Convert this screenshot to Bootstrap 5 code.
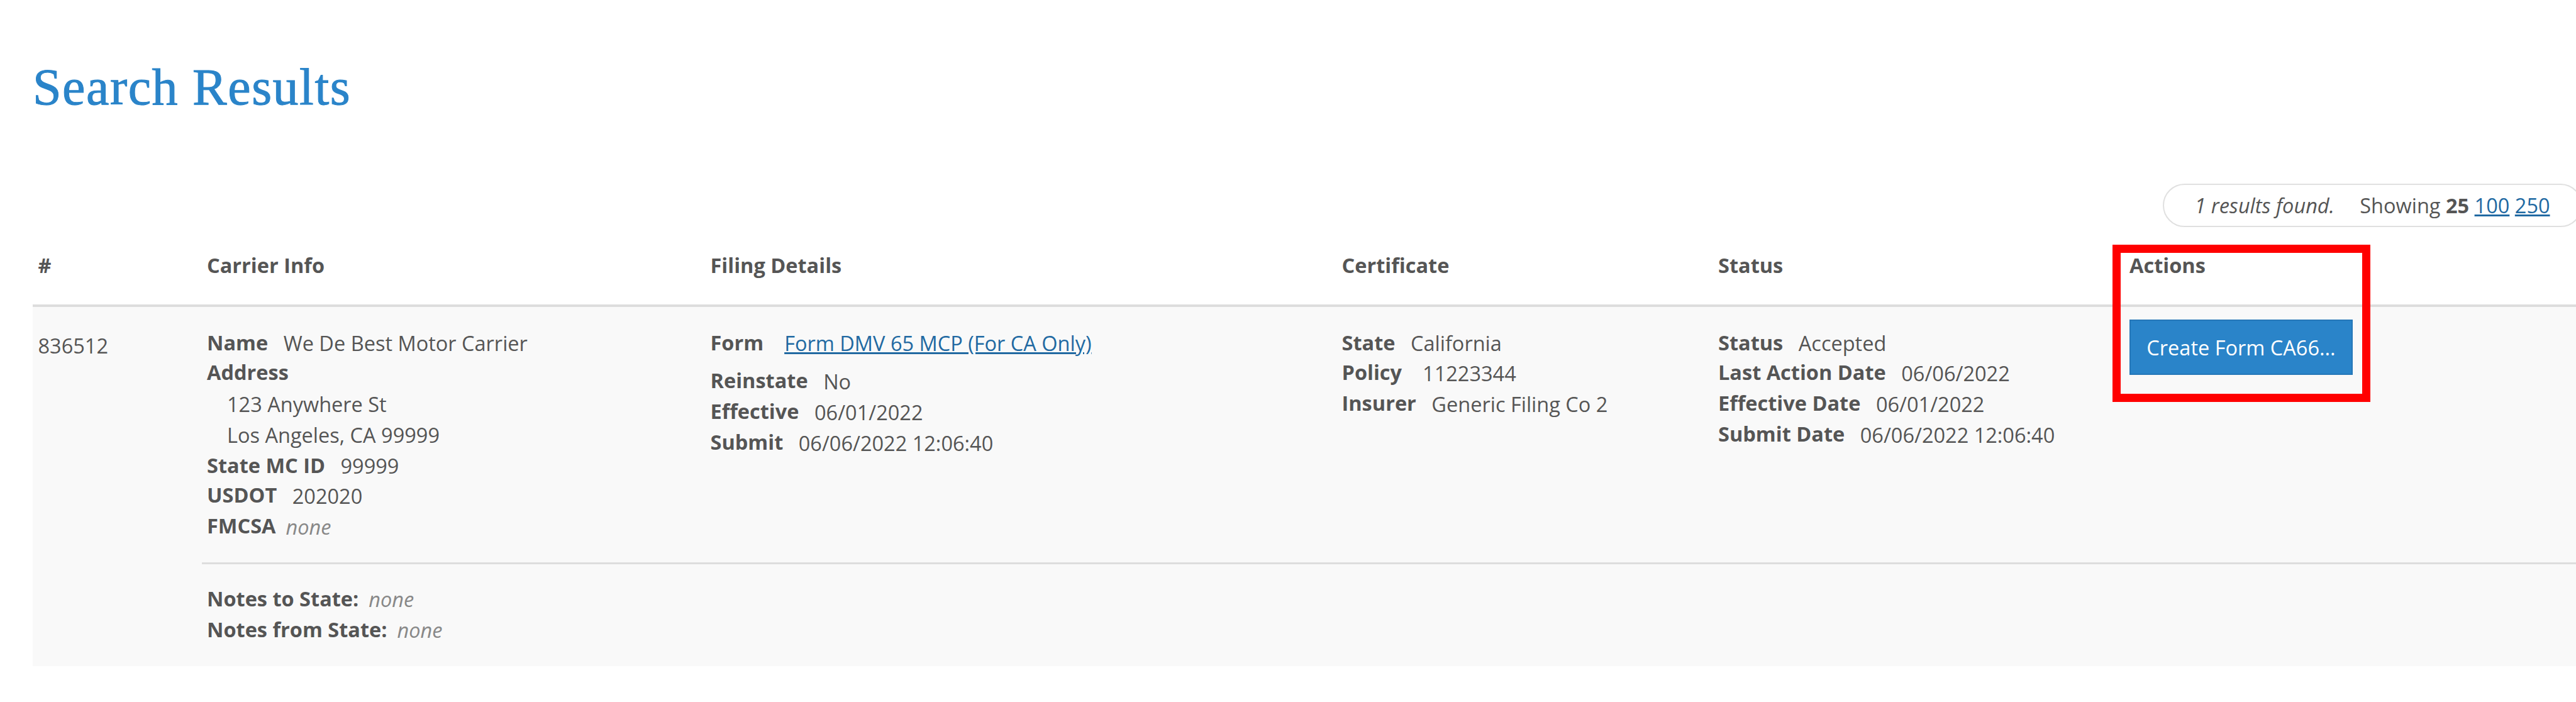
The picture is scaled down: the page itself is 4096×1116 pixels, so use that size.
<!DOCTYPE html>
<html lang="en">
<head>
    <meta charset="UTF-8">
    <meta name="viewport" content="width=device-width, initial-scale=1">
    <title>Search Results</title>
    <link href="https://cdn.jsdelivr.net/npm/bootstrap@5.3.2/dist/css/bootstrap.min.css" rel="stylesheet">
    <style>
        body {
            font-family: "Open Sans", sans-serif;
            font-size: 32.5px;
            line-height: 47.6px;
            color: #555;
            background: #fff;
        }
        a { color: #2169a2; }
        .page { padding: 89px 0 0 52px; }
        .page-title {
            font-family: Georgia, "Liberation Serif", serif;
            font-size: 82px;
            line-height: 100px;
            letter-spacing: 1.5px;
            -webkit-text-stroke: 1px #2a84c9;
            color: #2a84c9;
            margin-bottom: 103px;
        }
        .result-count {
            height: 69px;
            width: 667px;
            margin-right: -10px;
            padding: 9px 0 0 48.5px;
            border: 2px solid #e0e0e0;
            white-space: nowrap;
        }
        .showing { margin-left: 32px; }
        .results { table-layout: fixed; border-collapse: separate; border-spacing: 0; color: #555; }
        .results > thead > tr > th {
            height: 127px;
            padding: 37px 8.5px 0;
            border-bottom: 4px solid #ddd;
            vertical-align: top;
            font-weight: 700;
        }
        .results > tbody > tr > td {
            padding: 32.5px 8.5px 0;
            border: 0;
            background: #f9f9f9;
            vertical-align: top;
        }
        .results .filing > td { height: 406px; }
        .results .filing > .record-id { padding-top: 38px; }
        .results .notes > td { height: 164.5px; border-top: 3px solid #ddd; padding-top: 30.5px; }
        .field { height: 49.2px; white-space: nowrap; }
        .field.snug { height: 47.6px; }
        .field.tall { height: 60.4px; }
        .field span, .field a, .field em { vertical-align: -1.7px; margin-left: 24.5px; }
        .field em { color: #888; margin-left: 16px; }
        .field .indent { margin-left: 32px; }
        .field .wide { margin-left: 33px; }
        .results .filing > .actions { padding-top: 20px; position: relative; }
        .btn-create {
            --bs-btn-color: #fff;
            --bs-btn-bg: #2a84c9;
            --bs-btn-border-color: #2577b8;
            --bs-btn-font-size: 32.5px;
            --bs-btn-line-height: 47.6px;
            --bs-btn-padding-x: 0;
            --bs-btn-padding-y: 0;
            --bs-btn-border-width: 2px;
            width: 355px;
            height: 88px;
            padding-top: 2px;
        }
        /* red frame drawn over the Actions column */
        .callout {
            position: absolute;
            top: -99px;
            left: -19px;
            width: 410px;
            height: 250px;
            border: 13px solid #f00;
            pointer-events: none;
        }
    </style>
</head>
<body class="overflow-hidden">
<div class="page">
    <h1 class="page-title fw-normal">Search Results</h1>

    <div class="d-flex justify-content-end">
        <div class="result-count rounded-pill flex-shrink-0">
            <em>1 results found.</em>
            <span class="showing">Showing <b>25</b> <a href="#">100</a> <a href="#">250</a></span>
        </div>
    </div>

    <table class="table results mb-0">
        <colgroup>
            <col style="width:268.5px">
            <col style="width:800.5px">
            <col style="width:1004px">
            <col style="width:598.5px">
            <col style="width:654px">
            <col>
        </colgroup>
        <thead>
        <tr>
            <th>#</th>
            <th>Carrier Info</th>
            <th>Filing Details</th>
            <th>Certificate</th>
            <th>Status</th>
            <th>Actions</th>
        </tr>
        </thead>
        <tbody>
        <tr class="filing">
            <td class="record-id" rowspan="2">836512</td>
            <td>
                <div class="field snug"><b>Name</b><span>We De Best Motor Carrier</span></div>
                <div class="field"><b>Address</b></div>
                <div class="field"><span class="indent">123 Anywhere St</span></div>
                <div class="field"><span class="indent">Los Angeles, CA 99999</span></div>
                <div class="field snug"><b>State MC ID</b><span>99999</span></div>
                <div class="field"><b>USDOT</b><span>202020</span></div>
                <div class="field"><b>FMCSA</b><em>none</em></div>
            </td>
            <td>
                <div class="field tall"><b>Form</b><a class="wide" href="#">Form DMV 65 MCP (For CA Only)</a></div>
                <div class="field"><b>Reinstate</b><span>No</span></div>
                <div class="field"><b>Effective</b><span>06/01/2022</span></div>
                <div class="field"><b>Submit</b><span>06/06/2022 12:06:40</span></div>
            </td>
            <td>
                <div class="field snug"><b>State</b><span>California</span></div>
                <div class="field"><b>Policy</b><span class="wide">11223344</span></div>
                <div class="field"><b>Insurer</b><span>Generic Filing Co 2</span></div>
            </td>
            <td>
                <div class="field snug"><b>Status</b><span>Accepted</span></div>
                <div class="field"><b>Last Action Date</b><span>06/06/2022</span></div>
                <div class="field"><b>Effective Date</b><span>06/01/2022</span></div>
                <div class="field"><b>Submit Date</b><span>06/06/2022 12:06:40</span></div>
            </td>
            <td class="actions">
                <button type="button" class="btn btn-create rounded-0">Create Form CA66...</button>
                <div class="callout"></div>
            </td>
        </tr>
        <tr class="notes">
            <td colspan="5">
                <div class="field"><b>Notes to State:</b><em>none</em></div>
                <div class="field"><b>Notes from State:</b><em>none</em></div>
            </td>
        </tr>
        </tbody>
    </table>
</div>
<script src="https://cdn.jsdelivr.net/npm/bootstrap@5.3.2/dist/js/bootstrap.bundle.min.js"></script>
</body>
</html>
